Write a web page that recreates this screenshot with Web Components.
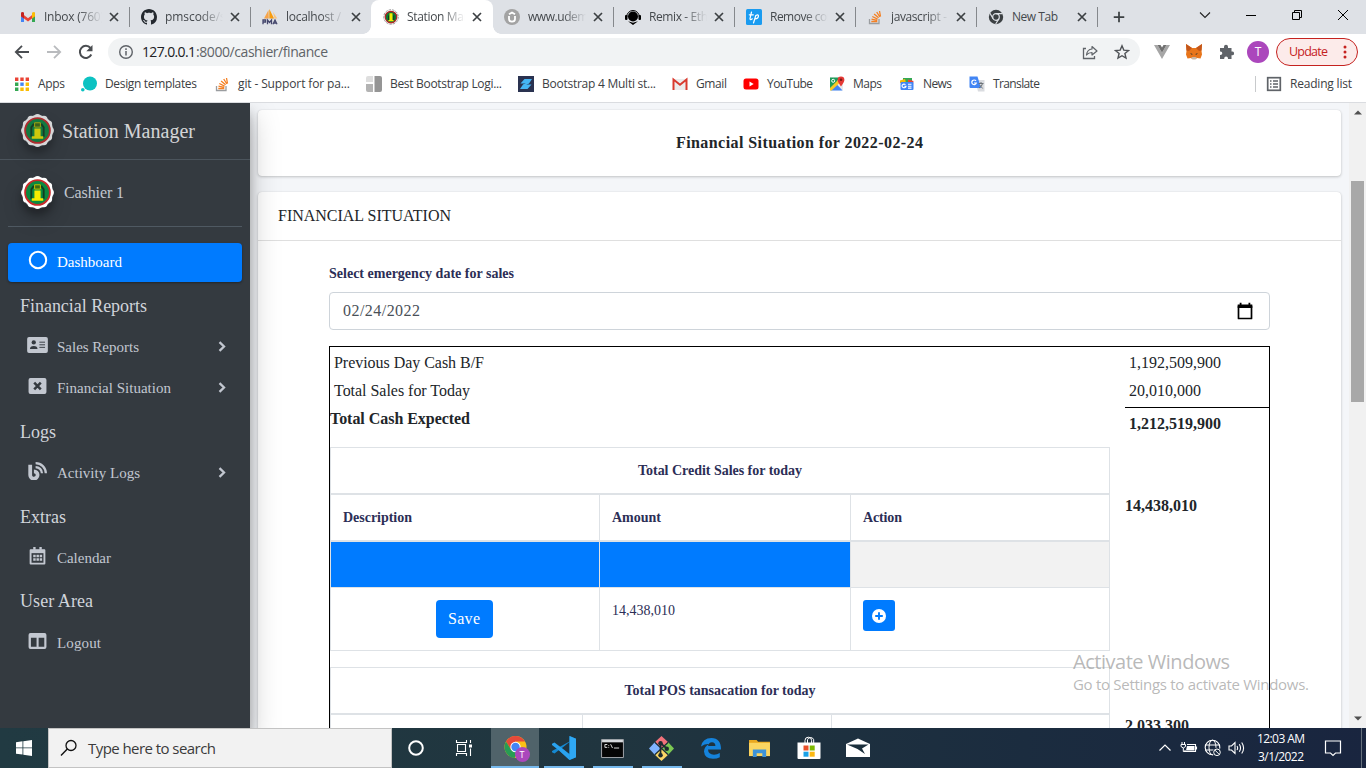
<!DOCTYPE html>
<html lang="en">
<head>
<meta charset="utf-8">
<title>Station Manager</title>
<style>
html,body{margin:0;padding:0;width:1366px;height:768px;overflow:hidden;background:#fff}
</style>
</head>
<body>
<desktop-screen></desktop-screen>
<script>
const ICONS = {
gmail:['0 0 16 16','<path d="M1 3.5V13h3V7.5z" fill="#4285f4"/><path d="M15 3.500V13h-3V7.500z" fill="#34a853"/><path d="M1 3.800 8 9.200v3.200L1 7.200z" fill="#ea4335"/><path d="M8 9.200 15 3.800v3.400L8 12.400z" fill="#ea4335"/><path d="M12 6.200 15 4v3.300l-3 2.200z" fill="#fbbc04"/><path d="M1 7.200V4.300Q1.300 2.300 3.400 3.200L4 3.800v5.700z" fill="#c5221f"/><path d="M12 3.800Q14.800 2 15 4.500v2.200l-3 2.300z" fill="#fbbc04"/>'],
github:['0 0 16 16','<path fill="#24292f" fill-rule="evenodd" d="M8 0C3.58 0 0 3.58 0 8c0 3.540 2.290 6.530 5.470 7.590.4.070.550-.170.550-.380 0-.190-.010-.820-.010-1.490-2.010.370-2.530-.490-2.690-.940-.090-.230-.480-.940-.820-1.130-.280-.150-.680-.520-.010-.530.630-.010 1.080.580 1.230.820.720 1.210 1.870.870 2.330.660.070-.520.280-.870.510-1.070-1.780-.200-3.640-.890-3.640-3.950 0-.870.310-1.590.820-2.150-.080-.200-.360-1.020.080-2.120 0 0 .670-.210 2.200.820.640-.180 1.320-.270 2-.270s1.360.090 2 .270c1.530-1.040 2.200-.820 2.200-.820.440 1.100.160 1.920.080 2.120.510.560.820 1.270.820 2.150 0 3.070-1.870 3.750-3.650 3.950.290.250.540.730.540 1.480 0 1.070-.010 1.930-.010 2.200 0 .210.150.460.550.380A8.010 8.010 0 0 0 16 8c0-4.420-3.580-8-8-8z"/>'],
pma:['0 0 16 16','<path d="M2 9.500 6.500 1l.3 8.500z" fill="#f7a54b"/><path d="M7.300 9.500V0l4.800 9.500z" fill="#f89c0e"/><path d="M11 3l4.300 6.500H12.500z" fill="#fbc57c"/><path d="M1 15.200v-4.200h2.500v2H1M5.500 15.200v-4.200L7.500 13.500 9.500 11v4.200M11 15.200l2-4.200 2 4.200M12 14h2.500" fill="none" stroke="#44466c" stroke-width="1.300"/>'],
station:['0 0 32 32','<g fill="#fff"><circle cx="16" cy="16" r="15"/><circle cx="16" cy="3.600" r="3.500"/><circle cx="22.200" cy="5.300" r="3.500"/><circle cx="26.700" cy="9.800" r="3.500"/><circle cx="28.400" cy="16" r="3.500"/><circle cx="26.700" cy="22.200" r="3.500"/><circle cx="22.200" cy="26.700" r="3.500"/><circle cx="16" cy="28.400" r="3.500"/><circle cx="9.800" cy="26.700" r="3.500"/><circle cx="5.300" cy="22.200" r="3.500"/><circle cx="3.600" cy="16" r="3.500"/><circle cx="5.300" cy="9.800" r="3.500"/><circle cx="9.800" cy="5.300" r="3.500"/></g><circle cx="16" cy="16" r="12" fill="#0b8a41" stroke="#c92a2a" stroke-width="1.800"/><path d="M10 22v-9l2.500-3.500M22 22v-9l-2.500-3.500" fill="none" stroke="#123c1f" stroke-width="1.800"/><path d="M13 14h6v7.500h2.500V24h-11v-2.500H13z" fill="#f5ec00"/><path d="M13.200 8.500h5.600v4.200h-5.600z" fill="#3d6b12" stroke="#c9c400" stroke-width=".9"/>'],
tabstation:['0 0 32 32','<circle cx="16" cy="16" r="14.500" fill="#fff" stroke="#9a9a9a" stroke-width="2" stroke-dasharray="5 2"/><circle cx="16" cy="16" r="11.500" fill="#0b7a35" stroke="#b02525" stroke-width="2.500"/><path d="M11 22v-9M21.500 22v-9" stroke="#123c1f" stroke-width="2"/><path d="M13 8.500h6V22h2v2.500H11V22h2z" fill="#f5ec00"/>'],
udemy:['0 0 16 16','<circle cx="8" cy="8" r="8" fill="#a3a3a3"/><path d="M5 7v3a3 2.700 0 0 0 6 0V7M5 5.300 8 3.500l3 1.800" fill="none" stroke="#fff" stroke-width="1.800"/>'],
remix:['0 0 16 16','<circle cx="8" cy="7.500" r="5"/><path d="M1.700 8a6.300 6.500 0 1 1 12.600 0" fill="none" stroke="#000" stroke-width="1"/><rect x="0" y="6" width="2.500" height="5" rx="1"/><rect x="13.500" y="6" width="2.500" height="5" rx="1"/><path d="M3 12.300 8 16l5-3.700-5 1.500z"/>'],
tp:['0 0 16 16','<rect width="16" height="16" rx="1.500" fill="#1a9bf0"/><path d="M5.500 3 4 9.500q0 2 2.300.3M3.300 5.800h4M7.500 14l2.300-7.500q2.500-1.300 2.700.3 0 3-3.500 3" fill="none" stroke="#fff" stroke-width="1.200" stroke-linecap="round"/>'],
so:['0 0 16 16','<path d="M2.500 10v4.500h9.500V10" fill="none" stroke="#9a9da0" stroke-width="1.300"/><path d="M4.300 12.500h6M4.500 10.200l5.800 1.100M5.300 7.500l5.300 2.600M7.100 5l4.500 3.800M9.700 3l3.200 5M12.500 2l1 5.500" stroke="#f48024" stroke-width="1.300"/>'],
chromegray:['0 0 16 16','<circle cx="8" cy="8" r="7.200" fill="#3c4043"/><circle cx="8" cy="8" r="3.300" fill="#3c4043" stroke="#dee1e6" stroke-width="1.200"/><path d="M8 4.700h6.500M5.100 9.700 2 4.300M10.900 9.700 7.700 15" stroke="#dee1e6" stroke-width="1.200"/>'],
close:['0 0 16 16','<path d="M4 4l8 8M12 4l-8 8" stroke="#3c4043" stroke-width="1.700"/>'],
plus:['0 0 16 16','<path d="M8 2v12M2 8h12" stroke="#3c4043" stroke-width="2"/>'],
chevdown:['0 0 16 16','<path d="M3 5.500 8 10.500 13 5.500" fill="none" stroke="#222" stroke-width="1.100"/>'],
min:['0 0 16 16','<path d="M3 8.500h10" stroke="#000"/>'],
restore:['0 0 16 16','<path d="M3.500 5.500h7v7h-7zM5.500 5V3.500h7v7H11" fill="none" stroke="#000"/>'],
winclose:['0 0 16 16','<path d="M3 3l10 10M13 3 3 13" stroke="#000" stroke-width="1"/>'],
back:['0 0 16 16','<path d="M15 8H2M8 1.800 1.800 8 8 14.200" fill="none" stroke="#4a4d51" stroke-width="1.800"/>'],
fwd:['0 0 16 16','<path d="M1 8h13M8 1.800 14.200 8 8 14.200" fill="none" stroke="#b9bbbe" stroke-width="1.800"/>'],
reload:['0 0 16 16','<path d="M13.300 10.500A6 6 0 1 1 12.500 4" fill="none" stroke="#4a4d51" stroke-width="2"/><path d="M14.500 1v6.300H8.300z" fill="#4a4d51"/>'],
info:['0 0 16 16','<circle cx="8" cy="8" r="6.300" fill="none" stroke="#5f6368" stroke-width="1.400"/><path d="M8 7v4.500M8 4.300V6" stroke="#5f6368" stroke-width="1.500"/>'],
share:['0 0 16 16','<path d="M4 4.500H1.500v10h11V12" fill="none" stroke="#5f6368" stroke-width="1.300"/><path d="M4.500 11Q5 5.500 10 5V2.500L15 7l-5 4V8.500Q6.500 8.500 4.500 11z" fill="none" stroke="#5f6368" stroke-width="1.200" stroke-linejoin="round"/>'],
star:['0 0 16 16','<path d="M8 1.800l1.800 4.300 4.700.4-3.600 3 1.100 4.600L8 11.700l-4 2.400 1.100-4.600-3.600-3 4.700-.4z" fill="none" stroke="#505357" stroke-width="1.400"/>'],
vue:['0 0 16 16','<path d="M0 1h3.500L8 8.800 12.500 1H16L8 15z" fill="#a6a6a6"/><path d="M3.500 1h3L8 3.600 9.500 1h3L8 8.800z" fill="#707070"/>'],
fox:['0 0 16 16','<path d="M0 0l6 4h4l6-4-.5 7 .5 3.500-1.500 4L11 14l-1.500 1h-3L5 14l-3.500.5-1.500-4L.5 7z" fill="#e8751a"/><path d="M0 0l6 4-3 3-2.500-.5zM16 0l-6 4 3 3 2.500-.5z" fill="#c3561a"/><path d="M4 9l2.500 1L6 11zM12 9l-2.500 1 .5 1zM6.500 13h3l.3 1.500H6.200z" fill="#24302f"/><path d="M5 14l1.300-1h3.400l1.300 1-1.500 1.500h-3z" fill="#c9b7a5"/>'],
puzzle:['0 0 16 16','<path d="M6 2.800a2 2 0 0 1 4 0V4h3.500v3.500h.7a1.900 1.900 0 0 1 0 3.800h-.7V15H10v-.5a1.900 1.900 0 0 0-3.800 0v.5H2v-4h.5a1.800 1.800 0 0 0 0-3.600H2V4h4z" fill="#5f6368"/>'],
dots:['0 0 16 16','<g fill="#c5221f"><circle cx="8" cy="3" r="1.500"/><circle cx="8" cy="8" r="1.500"/><circle cx="8" cy="13" r="1.500"/></g>'],
apps:['0 0 16 16','<g><path fill="#ea4335" d="M1 1.500h3.400v3.400H1zM6.300 1.500h3.400v3.400H6.300zM11.600 1.500H15v3.400h-3.400z"/><path fill="#34a853" d="M1 6.500h3.400v3.400H1zM1 11.500h3.400v3.400H1z"/><path fill="#4285f4" d="M6.300 6.500h3.400v3.400H6.300z"/><path fill="#fbbc04" d="M11.600 6.500H15v3.400h-3.400zM6.300 11.500h3.400v3.400H6.300zM11.600 11.500H15v3.400h-3.400z"/></g>'],
design:['0 0 16 16','<circle cx="9" cy="7.500" r="7" fill="#0cc2c2"/><circle cx="1.800" cy="13.800" r="1.800" fill="#0cc2c2"/>'],
bestboot:['0 0 16 16','<path d="M0 2q0-2 2-2h5v6H0z" fill="#dedede"/><path d="M0 8h7v8H2q-2 0-2-2z" fill="#b3b3b3"/><path d="M8.500 0H14q2 0 2 2v12q0 2-2 2H8.500z" fill="#959595"/>'],
bs4:['0 0 16 16','<path d="M0 0h16v16H0z" fill="#2a3250"/><path d="M6.500 3h7.500L11 7.500H2.500zM5 8.500h8.500L9.500 13H2z" fill="#45b5f5"/><path d="M5.500 9.500 10.500 6.500" stroke="#45b5f5" stroke-width="2"/>'],
gmail2:['0 0 16 16','<path d="M1 3h14v11H1z" fill="#ececec"/><path d="M1.500 14V3.500L8 8.800l6.500-5.300V14" fill="none" stroke="#d93a2f" stroke-width="2"/>'],
youtube:['0 0 16 16','<rect x="0.500" y="2.500" width="15" height="11" rx="2.500" fill="#f00"/><path d="M6.500 5.500v5L10.700 8z" fill="#fff"/>'],
maps:['0 0 16 16','<path d="M1 1.500h13v13H1z" fill="#e8eaed"/><path d="M1 1.500h9L7 8l-6 5.500z" fill="#1e9c5a"/><path d="M1.500 14.500 8 8.500l5.500 6z" fill="#4285f4"/><path d="M1 12 9 4l2 2.500-8.500 8H1z" fill="#f8c926"/><path d="M12 10.500Q8.500 6 8.600 3.800a3.400 3.400 0 0 1 6.800 0Q15.500 6 12 10.500z" fill="#e53935"/><circle cx="12" cy="3.800" r="1.300" fill="#7c1b16"/><circle cx="4.200" cy="4.800" r="1.500" fill="none" stroke="#fff"/>'],
news:['0 0 16 16','<path d="M4 2h9v4H4z" fill="#34a853"/><path d="M1 4.500l5-1.500 1 4H1z" fill="#fbbc04"/><path d="M9 3.500l5.500 1.500-.5 3H9z" fill="#ea4335"/><rect x="1.500" y="6" width="13" height="8" rx="1" fill="#4285f4"/><path d="M6.500 8.700A2 1.800 0 1 0 7 10.300H5.300M9 8.300h3.500M9 10.200h3.500M9 12.100h3.500" fill="none" stroke="#fff" stroke-width="1.100"/>'],
translate:['0 0 16 16','<path d="M6 4h9.500v11.500H9z" fill="#dadce0"/><path d="M0.500 0.500h8L12 12H1.500q-1 0-1-1z" fill="#4285f4"/><path d="M7 5A2.300 2.300 0 1 0 7.300 7H5" fill="none" stroke="#fff" stroke-width="1.200"/><path d="M9.500 7.500h5M12 6v1.500M13.500 7.500q-.5 3-3.500 4.500M10.700 9l3 3.500" fill="none" stroke="#6d7378"/>'],
reading:['0 0 16 16','<rect x="1.700" y="1.700" width="12.600" height="12.600" fill="none" stroke="#5f6368" stroke-width="1.700"/><path d="M4 5h1.500M7 5h5M4 8h1.500M7 8h5M4 11h1.500M7 11h5" stroke="#5f6368" stroke-width="1.400"/>'],
ring:['0 0 20 20','<circle cx="10" cy="10" r="8.200" fill="none" stroke="#fff" stroke-width="2"/>'],
idcard:['0 0 22 17','<rect width="22" height="17" rx="2" fill="#c2c7d0"/><circle cx="7" cy="5.800" r="2.300" fill="#343a40"/><path d="M3 12.800q0-3.300 4-3.300t4 3.300z" fill="#343a40"/><path d="M13 5.500h6M13 8.300h6M13 11h6" stroke="#343a40" stroke-width="1"/>'],
xbox:['0 0 19 17','<rect width="19" height="17" rx="2" fill="#c2c7d0"/><path d="M6 5l7 7M13 5l-7 7" stroke="#343a40" stroke-width="2.700"/>'],
blog:['0 0 20 19','<path d="M2.300 3v10.500A3.900 3.900 0 1 0 6.200 9.800" fill="none" stroke="#c2c7d0" stroke-width="4"/><path d="M8 1.200A10.800 10.800 0 0 1 18.800 12M8 5.300A6.700 6.700 0 0 1 14.700 12" fill="none" stroke="#c2c7d0" stroke-width="2.400"/>'],
cal:['0 0 17 19','<path d="M4 0h2.500v3H4zM10.500 0H13v3h-2.500z" fill="#c2c7d0"/><path d="M1.200 3.500h14.600v14H1.200z" fill="none" stroke="#c2c7d0" stroke-width="2" stroke-linejoin="round"/><path d="M1 3h15v3.500H1z" fill="#c2c7d0"/><path d="M4 9.500h9.500M4 13.200h9.500" stroke="#c2c7d0" stroke-width="2.600" stroke-dasharray="2.600 .8"/>'],
cols:['0 0 19 17','<path fill="#c2c7d0" fill-rule="evenodd" d="M2 0h15q2 0 2 2v13q0 2-2 2H2q-2 0-2-2V2Q0 0 2 0zM2.500 5v9.500h6V5zM10.700 5v9.500h6V5z"/>'],
angle:['0 0 8 11','<path d="M1.500 1.200 6 5.500 1.500 9.800" fill="none" stroke="#c2c7d0" stroke-width="2.300"/>'],
date:['0 0 16 18','<path d="M1.500 4h13v12.500h-13z" fill="none" stroke="#000" stroke-width="1.700" stroke-linejoin="round"/><path d="M.7 2.500h14.600V6H.7zM2.700 .8h1.800v2H2.700zM11.500 .8h1.800v2h-1.800z"/>'],
pluscircle:['0 0 14 14','<circle cx="7" cy="7" r="7" fill="#fff"/><path d="M7 3.200v7.600M3.200 7h7.600" stroke="#007bff" stroke-width="1.900"/>'],
up:['0 0 8 5','<path d="M0 4.500 4 .5l4 4z" fill="#505050"/>'],
down:['0 0 8 5','<path d="M0 .5h8l-4 4z" fill="#505050"/>'],
win:['0 0 16 16','<path d="M0 2.300 6.500 1.300v6.200H0zM7.300 1.200 16 0v7.500H7.300zM0 8.300h6.500v6.300L0 13.700zM7.300 8.300H16V16l-8.700-1.200z" fill="#fff"/>'],
search:['0 0 18 18','<circle cx="11" cy="6.500" r="5" fill="none" stroke="#111" stroke-width="1.300"/><path d="M7.300 10 1 16.500" stroke="#111" stroke-width="1.400"/>'],
cortana:['0 0 18 18','<circle cx="9" cy="9" r="6.800" fill="none" stroke="#fff" stroke-width="2"/>'],
taskview:['0 0 18 18','<path d="M1.500 1v2.500h10V1M1.500 17v-2.500h10V17M2.500 5.500h8v7h-8zM15.500 1v3M15.500 9.500V17" fill="none" stroke="#fff" stroke-width="1.100"/><path d="M14 5.500h3v3h-3z" fill="#fff"/>'],
chrome:['0 0 26 26','<circle cx="11.500" cy="12" r="11" fill="#fbc116"/><path d="M2 6.500A11 11 0 0 1 21 6.500H11.500L7 14.500z" fill="#e5493a"/><path d="M2 6.500A11 11 0 0 0 10.500 23l5-8.500H7z" fill="#279c54"/><circle cx="11.500" cy="12" r="5.200" fill="#fff"/><circle cx="11.500" cy="12" r="4.200" fill="#4285f4"/>'],
vscode:['0 0 24 24','<path d="M17.500 0 24 2.700v18.600L17.500 24 7 14 2.500 17.500 0 16.300V15l17.500-9.500z" fill="#1589d1"/><path d="M0 9V7.700l2.500-1.200L17.500 18v6L7 14.500z" fill="#2aa3ef"/><path d="M17.500 6v12L10 12z" fill="#20343f"/><path d="M17.500 0 24 2.700v18.600L17.500 24z" fill="#2fa8f4"/>'],
cmd:['0 0 24 20','<path d="M.5.5h23v19H.5z" fill="#050505" stroke="#a7abb0"/><path d="M1 1h22v2.500H1z" fill="#d7dadd"/><path d="M6.500 5.800H4v3h2.500M8 6.300v.8M8 8.300v.8M10 5.500l2 4M13.500 9.500H19" fill="none" stroke="#e3e3e3" stroke-width="1"/>'],
git:['0 0 26 26','<path d="M13 0 20 6.500l-7 6.500-7-6.500z" fill="#f2727b"/><path d="M6 6.500l7 6.500-7 6.500L0 13z" fill="#80b3ff"/><path d="M20 6.500 26 13l-6 6.500-7-6.500z" fill="#7cc953"/><path d="M13 13l7 6.500-7 6.500-7-6.500z" fill="#fbd766"/><path d="M6 6.500 20 19.500M20 6.500 6 19.500" stroke="#203138" stroke-width="1.300"/><path d="M12 6.500v14M12 7.500l6.500 5.500" stroke="#1d2b30" stroke-width="1.800"/><circle cx="12" cy="7.500" r="2.300" fill="#1d2b30"/><circle cx="18.500" cy="13.300" r="2.300" fill="#1d2b30"/><circle cx="12" cy="20" r="2.300" fill="#1d2b30"/>'],
edge:['0 0 22 22','<path d="M1 9.500Q2.500 1 11.500 1 21 1.200 21 12.500H8Q8.300 17.500 14 17.700q3.200 0 5.800-1.600v4.200Q17 21.800 13 21.800 4.500 21.500 4 14.500q.2-5.300 5.500-7.800Q4 7 1 9.500zM8.100 9h7.300Q15.300 5.300 12 5.300 8.600 5.500 8.100 9z" fill="#1583dc"/>'],
folder:['0 0 24 20','<path d="M1 1h8l1.500 2H23v15H1z" fill="#e9a820"/><path d="M1 4h22v14H1z" fill="#fbd561"/><path d="M5 19v-8h14v8h-4v-4H9v4z" fill="#3d93d9"/>'],
store:['0 0 24 24','<path d="M8 7V4.500a3.300 3.300 0 0 1 6.600 0V7M10.500 7V3.700a3.300 3.300 0 0 1 6.200 0V7" fill="none" stroke="#fff"/><path d="M.5 6.500h23V22q0 1-1 1h-21q-1 0-1-1z" fill="#fff"/><path d="M6.500 9.500h5v5h-5z" fill="#e8502a"/><path d="M12.700 9.500h5v5h-5z" fill="#7eb900"/><path d="M6.500 15.700h5v5h-5z" fill="#1ba1e6"/><path d="M12.700 15.700h5v5h-5z" fill="#fcb813"/>'],
mail:['0 0 24 20','<path d="M0 6 12 .5 24 6v13H0z" fill="#fff"/><path d="M1 6.500h21.500L16 10.500l3 5.500-7.500-5z" fill="#1b2f3c"/>'],
traycaret:['0 0 16 16','<path d="M2.500 10.500 8 5l5.500 5.500" fill="none" stroke="#fff" stroke-width="1.200"/>'],
battery:['0 0 18 16','<path d="M7 4.500h8.500v7H5V10M16.500 6.500v3" fill="none" stroke="#fff" stroke-width="1.100"/><path d="M7 6h7.500v4.500H6z" fill="#fff"/><path d="M2 2v2.500M4.500 2v2.500M1 4.500h4.500v2L3.300 8 1 6.500zM3.300 8v3.500H5" fill="none" stroke="#fff"/>'],
globe:['0 0 18 18','<circle cx="8.500" cy="8.500" r="7.300" fill="none" stroke="#fff" stroke-width="1.100"/><ellipse cx="8.500" cy="8.500" rx="3.500" ry="7.300" fill="none" stroke="#fff"/><path d="M1 6h15M1 11h15" stroke="#fff"/><circle cx="13" cy="13.300" r="4.500" fill="#1a2a40"/><circle cx="13" cy="13.300" r="3.300" fill="none" stroke="#fff"/><path d="M10.800 11l4.500 4.500" stroke="#fff"/>'],
sound:['0 0 18 16','<path d="M1 6h2.500L7 2.500v11L3.500 10H1zM9 6q1.300 2 0 4M11.300 4.300q2.500 3.700 0 7.400M13.700 2.500q3.800 5.500 0 11" fill="none" stroke="#fff" stroke-width="1.100"/>'],
notif:['0 0 18 18','<path d="M1.500 2h15v12h-5L9 16.500 6.500 14h-5z" fill="none" stroke="#fff" stroke-width="1.200"/>']
};
function define(name, css, html){
  const t = document.createElement('template');
  t.innerHTML = '<style>' + css + '</style>' + html;
  customElements.define(name, class extends HTMLElement{
    constructor(){ super(); this.attachShadow({mode:'open'}).append(t.content.cloneNode(true)); }
  });
}
/* <ui-icon name w h> : inline SVG from the icon set */
customElements.define('ui-icon', class extends HTMLElement{
  connectedCallback(){
    if(this.shadowRoot) return;
    const [vb, body] = ICONS[this.getAttribute('name')];
    const w = this.getAttribute('w') || 16, h = this.getAttribute('h') || w;
    this.attachShadow({mode:'open'}).innerHTML =
      `<style>:host{display:block;flex:none;width:${w}px;height:${h}px}svg{display:block}</style><svg width="${w}" height="${h}" viewBox="${vb}">${body}</svg>`;
  }
});

/* ---------- browser chrome ---------- */
customElements.define('browser-tab', class extends HTMLElement{
  constructor(){
    super();
    const a = this.hasAttribute('active');
    this.attachShadow({mode:'open'}).innerHTML = `<style>
    :host{display:flex;align-items:center;box-sizing:border-box;width:121px;height:34px;padding-left:11px;position:relative;flex:none;color:#45494d;
      ${a ? 'background:#fff;border-radius:8px 8px 0 0;width:122px;padding-left:12px;margin-left:-1px;' : ''}}
    :host([active])::before,:host([active])::after{content:"";position:absolute;bottom:0;width:8px;height:8px}
    :host([active])::before{left:-8px;background:radial-gradient(circle at 0 0,transparent 7.5px,#fff 8px)}
    :host([active])::after{right:-8px;background:radial-gradient(circle at 100% 0,transparent 7.5px,#fff 8px)}
    .label{width:58px;margin-left:8px;overflow:hidden;-webkit-mask-image:linear-gradient(90deg,#000 60%,transparent 100%)}
    :host([whole]) .label{-webkit-mask-image:none}
    .x{margin-left:4px}
    .sep{width:1px;height:20px;background:#85888c;margin-left:7px}
    :host([nosep]) .sep,:host([active]) .sep{display:none}
    </style><ui-icon name="${this.getAttribute('icon')}"></ui-icon><div class="label"><slot></slot></div><ui-icon class="x" name="close"></ui-icon><div class="sep"></div>`;
  }
});
define('tab-strip', `:host{display:flex;height:34px;background:#dee1e6;padding-left:9px;font:12px/18px "Open Sans",sans-serif;align-items:center}
 .plus{margin-left:14px}.win{display:flex;margin-left:auto;padding-right:15px;gap:30px;margin-top:-5px}`,
`<browser-tab icon="gmail"><ui-text w="60">Inbox (760)</ui-text></browser-tab>
<browser-tab icon="github"><ui-text w="65">pmscode/st</ui-text></browser-tab>
<browser-tab icon="pma" nosep><ui-text w="58">localhost / </ui-text></browser-tab>
<browser-tab icon="tabstation" active><ui-text w="64">Station Man</ui-text></browser-tab>
<browser-tab icon="udemy"><ui-text w="66">www.udemy</ui-text></browser-tab>
<browser-tab icon="remix"><ui-text w="59">Remix - Eth</ui-text></browser-tab>
<browser-tab icon="tp"><ui-text w="64">Remove con</ui-text></browser-tab>
<browser-tab icon="so"><ui-text w="56">javascript -</ui-text></browser-tab>
<browser-tab icon="chromegray" whole><ui-text w="46">New Tab</ui-text></browser-tab>
<ui-icon class="plus" name="plus" w="14"></ui-icon>
<div class="win"><ui-icon name="chevdown"></ui-icon><ui-icon name="min"></ui-icon><ui-icon name="restore"></ui-icon><ui-icon name="winclose"></ui-icon></div>`);

define('nav-toolbar', `:host{display:flex;align-items:center;height:36px;background:#fff;box-sizing:border-box;padding:0 8px 0 14px;font:14px/20px "Open Sans",sans-serif;color:#5f6368}
 .nav{display:flex;gap:16px;width:94px}
 .omni{display:flex;align-items:center;width:1032px;height:28px;box-sizing:border-box;background:#f1f3f4;border-radius:14px;padding:0 10px}
 .url{display:flex;margin-left:8px;flex:1}.host{color:#202124}
 .act{display:flex;gap:16px}.ext{display:flex;gap:16px;margin-left:14px}
 .av{width:22px;height:22px;border-radius:50%;background:#ab47bc;color:#fff;font:12px/22px "Open Sans",sans-serif;text-align:center;margin-left:13px}
 .upd{display:flex;align-items:center;justify-content:space-between;box-sizing:border-box;width:82px;height:28px;border:1px solid #c5221f;border-radius:14px;background:#fcebea;color:#c5221f;padding:0 4px 0 12px;font-size:12.500px;margin-left:7px}`,
`<div class="nav"><ui-icon name="back"></ui-icon><ui-icon name="fwd"></ui-icon><ui-icon name="reload"></ui-icon></div>
<div class="omni"><ui-icon name="info"></ui-icon><div class="url"><ui-text class="host" w="54">127.0.0.1</ui-text><ui-text w="132">:8000/cashier/finance</ui-text></div>
<div class="act"><ui-icon name="share"></ui-icon><ui-icon name="star"></ui-icon></div></div>
<div class="ext"><ui-icon name="vue"></ui-icon><ui-icon name="fox"></ui-icon><ui-icon name="puzzle"></ui-icon></div>
<div class="av">T</div><div class="upd"><ui-text w="39">Update</ui-text><ui-icon name="dots"></ui-icon></div>`);

customElements.define('book-mark', class extends HTMLElement{
  constructor(){ super(); this.attachShadow({mode:'open'}).innerHTML = `<style>:host{display:flex;gap:8px;align-items:center}</style><ui-icon name="${this.getAttribute('icon')}"></ui-icon><slot></slot>`; }
});
define('bookmarks-bar', `:host{display:flex;height:33px;box-sizing:border-box;background:#fff;border-bottom:1px solid #dadce0;padding:0 14px 5px 14px;align-items:center;font:12px/18px "Open Sans",sans-serif;color:#3c4043;justify-content:space-between}
 .list{display:grid;grid-template-columns:67px 133px 152px 152px 154px 71px 86px 70px 70px 80px}
 .rl{border-left:1px solid #c8cacc;padding-left:10px;height:16px;display:flex;align-items:center}`,
`<div class="list"><book-mark icon="apps"><ui-text w="27">Apps</ui-text></book-mark>
<book-mark icon="design"><ui-text w="92">Design templates</ui-text></book-mark>
<book-mark icon="so"><ui-text w="112">git - Support for pa...</ui-text></book-mark>
<book-mark icon="bestboot"><ui-text w="112">Best Bootstrap Logi...</ui-text></book-mark>
<book-mark icon="bs4"><ui-text w="114">Bootstrap 4 Multi st...</ui-text></book-mark>
<book-mark icon="gmail2"><ui-text w="31">Gmail</ui-text></book-mark>
<book-mark icon="youtube"><ui-text w="46">YouTube</ui-text></book-mark>
<book-mark icon="maps"><ui-text w="29">Maps</ui-text></book-mark>
<book-mark icon="news"><ui-text w="29">News</ui-text></book-mark>
<book-mark icon="translate"><ui-text w="47">Translate</ui-text></book-mark></div>
<div class="rl"><book-mark icon="reading"><ui-text w="62">Reading list</ui-text></book-mark></div>`);

/* ---------- sidebar ---------- */
customElements.define('nav-item', class extends HTMLElement{
  constructor(){
    super();
    this.attachShadow({mode:'open'}).innerHTML = `<style>
    :host{display:flex;align-items:center;height:39px;margin-bottom:2px;box-sizing:border-box;padding:0 16px 2px 17px;border-radius:4px;font-size:15px;color:#c2c7d0}
    :host([active]){background:#007bff;color:#fff;box-shadow:0 1px 3px rgba(0,0,0,.12),0 1px 2px rgba(0,0,0,.24)}
    .i{width:25px;display:flex;justify-content:center;margin-right:7px;margin-top:-3px}
    .a{margin-left:auto}</style>
    <div class="i"><ui-icon name="${this.getAttribute('icon')}" w="${this.getAttribute('iw')}" h="${this.getAttribute('ih')}"></ui-icon></div><slot></slot>
    ${this.hasAttribute('more') ? '<ui-icon class="a" name="angle" w="8" h="11"></ui-icon>' : ''}`;
  }
});
define('side-bar', `:host{display:block;box-sizing:border-box;width:250px;height:100%;background:#343a40;color:#c2c7d0;box-shadow:0 14px 28px rgba(0,0,0,.25),0 10px 10px rgba(0,0,0,.22);font-family:"Liberation Serif",serif;flex:none;position:relative}
 .brand{display:flex;align-items:center;height:57px;box-sizing:border-box;padding:2px 0 2px 21px;gap:8px;border-bottom:1px solid #4b545c;color:rgba(255,255,255,.8);font-size:20px}
 .logo{border-radius:50%;box-shadow:0 10px 20px rgba(0,0,0,.19),0 6px 6px rgba(0,0,0,.23)}.brand .logo{opacity:.8;margin-top:-2px}
 .inner{padding:0 8px}
 .user{display:flex;align-items:center;height:67px;box-sizing:border-box;border-bottom:1px solid #4f5962;padding:0 0 1px 13px;gap:10px;font-size:16px;margin-bottom:16px}
 .h{font-size:18px;color:#d0d4db;padding-left:12px;height:44px;line-height:44px}
 .h.a{height:44px;line-height:43px}`,
`<div class="brand"><ui-icon class="logo" name="station" w="33"></ui-icon><ui-text w="133">Station Manager</ui-text></div>
<div class="inner"><div class="user"><ui-icon class="logo" name="station" w="33"></ui-icon><ui-text w="60">Cashier 1</ui-text></div>
<nav-item active icon="ring" iw="20" ih="20"><ui-text w="65">Dashboard</ui-text></nav-item>
<div class="h"><ui-text w="127">Financial Reports</ui-text></div>
<nav-item more icon="idcard" iw="21" ih="16"><ui-text w="82">Sales Reports</ui-text></nav-item>
<nav-item more icon="xbox" iw="19" ih="16"><ui-text w="114">Financial Situation</ui-text></nav-item>
<div class="h"><ui-text w="36">Logs</ui-text></div>
<nav-item more icon="blog" iw="19" ih="18"><ui-text w="83">Activity Logs</ui-text></nav-item>
<div class="h"><ui-text w="46">Extras</ui-text></div>
<nav-item icon="cal" iw="17" ih="18"><ui-text w="54">Calendar</ui-text></nav-item>
<div class="h a"><ui-text w="73">User Area</ui-text></div>
<nav-item icon="cols" iw="19" ih="16"><ui-text w="44">Logout</ui-text></nav-item></div>`);

/* ---------- page ---------- */
define('content-card', `:host{display:block;background:#fff;border-radius:4px;box-shadow:0 0 1px rgba(0,0,0,.125),0 1px 3px rgba(0,0,0,.2)}`, `<slot></slot>`);
define('date-field', `:host{display:flex;align-items:center;justify-content:space-between;box-sizing:border-box;width:941px;height:38px;border:1px solid #ced4da;border-radius:4px;padding:0 16px 1px 13px;font-size:16px;color:#495057}`,
 `<slot></slot><ui-icon name="date" w="16" h="18"></ui-icon>`);
define('sales-table', `:host{display:block;width:780px;box-sizing:border-box;color:#2c2e56;font-size:14px;--l:#dee2e6}
 .title{box-sizing:border-box;height:46px;border:1px solid var(--l);border-bottom:0;display:flex;justify-content:center;align-items:center;font-weight:bold;padding-top:1px}
 .row{display:grid;grid-template-columns:var(--cols,269px 251px 260px)}
 .row>div{box-sizing:border-box;border-top:2px solid var(--l);border-left:1px solid var(--l);height:47px;padding-left:12px;display:flex;align-items:center}
 .row>div:last-child{border-right:1px solid var(--l)}
 .head{font-weight:bold}
 .fill>div{background:#007bff;background-clip:padding-box}.fill>div:last-child{background:#f2f2f2}
 .foot>div{height:64px;border-top-width:1px;border-bottom:1px solid var(--l);align-items:flex-start;padding-top:12px}
 .foot>div:first-child{justify-content:center;padding:12px 2px 0 0}
 .foot .amt{line-height:21px}
 button{border:0;background:#007bff;color:#fff;border-radius:4px;display:flex;align-items:center;justify-content:center;padding:0;font:16px "Liberation Serif",serif}
 .save{width:57px;height:38px}.add{width:32px;height:31px;border-radius:3px}
 :host([brief]) .fill,:host([brief]) .foot{display:none}`,
`<div class="title"><slot></slot></div>
<div class="row head"><div><slot name="a"></slot></div><div><slot name="b"></slot></div><div><slot name="c"></slot></div></div>
<div class="row fill"><div></div><div></div><div></div></div>
<div class="row foot"><div><button class="save"><ui-text w="32">Save</ui-text></button></div><div class="amt"><slot name="amt"></slot></div><div><button class="add"><ui-icon name="pluscircle" w="14"></ui-icon></button></div></div>`);
define('scroll-bar', `:host{display:flex;flex-direction:column;align-items:center;box-sizing:border-box;width:17px;height:100%;background:#f1f1f1;padding:7px 0 7px;flex:none}
 .thumb{width:13px;height:221px;background:#a8a8a8;margin-top:66px}.d{margin-top:auto}`,
 `<ui-icon name="up" w="8" h="5"></ui-icon><div class="thumb"></div><ui-icon class="d" name="down" w="8" h="5"></ui-icon>`);
define('page-view', `:host{display:flex;height:625px;overflow:hidden;background:#f4f6f9;font:16px/28px "Liberation Serif",serif;color:#212529;position:relative}
 main{flex:1;height:625px;box-sizing:border-box;padding:7px 8px 0;overflow:hidden}
 .top{height:66px;display:flex;align-items:center;justify-content:center;font-weight:bold;margin-bottom:16px}
 .card{height:700px}
 .ch{height:48px;display:flex;align-items:center;padding-left:20px;border-bottom:1px solid #dfdfdf}
 .cb{padding:19px 0 0 71px}
 .lab{font-size:14px;font-weight:bold;color:#2c2e56;margin-bottom:4px}
 .sheet{box-sizing:border-box;width:941px;height:500px;border:1px solid #000;margin-top:16px;display:grid;grid-template-columns:795px 144px;padding-top:2px}
 .in{padding-left:4px}b{display:block}
 .t1{margin-top:14px;margin-bottom:16px}
 .sum{border-top:1px solid #000;margin-top:2px;padding:2px 0 0 4px}
 .s2{margin-top:54px}.s3{margin-top:192px}`,
`<side-bar></side-bar>
<main><content-card><div class="top"><ui-text w="247">Financial Situation for 2022-02-24</ui-text></div></content-card>
<content-card class="card"><div class="ch"><ui-text w="173">FINANCIAL SITUATION</ui-text></div>
<div class="cb"><div class="lab"><ui-text w="185">Select emergency date for sales</ui-text></div>
<date-field><ui-text w="77">02/24/2022</ui-text></date-field>
<div class="sheet"><div><div class="in"><ui-text w="150">Previous Day Cash B/F</ui-text></div><div class="in"><ui-text w="136">Total Sales for Today</ui-text></div><b><ui-text w="140">Total Cash Expected</ui-text></b>
<sales-table class="t1"><ui-text w="164">Total Credit Sales for today</ui-text><ui-text slot="a" w="69">Description</ui-text><ui-text slot="b" w="49">Amount</ui-text><ui-text slot="c" w="39">Action</ui-text><ui-text slot="amt" w="63">14,438,010</ui-text></sales-table>
<sales-table brief style="--cols:252px 249px 279px"><ui-text w="191">Total POS tansacation for today</ui-text></sales-table></div>
<div><div class="in"><ui-text w="92">1,192,509,900</ui-text></div><div class="in"><ui-text w="72">20,010,000</ui-text></div>
<b class="sum"><ui-text w="92">1,212,519,900</ui-text></b><b class="s2"><ui-text w="72">14,438,010</ui-text></b><b class="s3"><ui-text w="64">2,033,300</ui-text></b></div></div>
</div></content-card></main><scroll-bar></scroll-bar>`);

/* ---------- taskbar ---------- */
define('task-button', `:host{display:flex;position:relative;align-items:center;justify-content:center;width:49px;height:40px;flex:none;box-sizing:border-box}
 :host([open])::after{content:"";position:absolute;bottom:0;left:4.500px;width:40px;height:2px;background:#76b9ed}
 :host([current]){background:#50636a}:host([current])::after{left:0;width:48px}:host([current]){width:48px}`, `<slot></slot>`);
define('task-bar', `:host{display:flex;height:40px;align-items:center;background:linear-gradient(90deg,#213a42,#20353f 45%,#1b2c3f 75%,#19253f);font-family:"Open Sans",sans-serif;color:#fff;position:relative}
 .start{width:48px;display:flex;justify-content:center}
 .search{display:flex;align-items:center;box-sizing:border-box;width:344px;height:40px;background:#f2f2f2;border:1px solid #c3c3c3;padding:0 11px;gap:10px;color:#3b3b3b;font-size:15px}
 .btns{display:flex}.chr{position:relative;margin-left:3px}
 .badge{position:absolute;right:0;bottom:-1px;width:15px;height:15px;border-radius:50%;background:#ab47bc;color:#fff;font:9px/15px "Open Sans",sans-serif;text-align:center}
 .tray{margin-left:auto;display:flex;align-items:center;padding-right:4px}
 .clock{font-size:12px;line-height:18px;display:flex;flex-direction:column;align-items:center;width:48px;margin:0 19px 0 11px}
 .show{width:1px;height:40px;background:#65707c;margin-left:19px}`,
`<div class="start"><ui-icon name="win"></ui-icon></div>
<div class="search"><ui-icon name="search" w="18"></ui-icon><ui-text w="128">Type here to search</ui-text></div>
<div class="btns"><task-button style="width:48px"><ui-icon name="cortana" w="18"></ui-icon></task-button><task-button style="width:51px;padding-right:4px"><ui-icon name="taskview" w="18"></ui-icon></task-button>
<task-button open current><div class="chr"><ui-icon name="chrome" w="26"></ui-icon><div class="badge">T</div></div></task-button>
<task-button open><ui-icon name="vscode" w="24"></ui-icon></task-button><task-button open><ui-icon name="cmd" w="23" h="19"></ui-icon></task-button><task-button open><ui-icon name="git" w="25"></ui-icon></task-button>
<task-button><ui-icon name="edge" w="22"></ui-icon></task-button><task-button><ui-icon name="folder" w="23" h="19"></ui-icon></task-button><task-button><ui-icon name="store" w="24"></ui-icon></task-button><task-button><ui-icon name="mail" w="24" h="20"></ui-icon></task-button></div>
<div class="tray"><ui-icon name="traycaret" w="16"></ui-icon><ui-icon name="battery" w="18" h="16" style="margin-left:7px"></ui-icon><ui-icon name="globe" w="18" style="margin-left:6px"></ui-icon><ui-icon name="sound" w="18" h="16" style="margin-left:6px"></ui-icon>
<div class="clock"><ui-text w="48">12:03 AM</ui-text><ui-text w="46">3/1/2022</ui-text></div><ui-icon name="notif" w="18"></ui-icon><div class="show"></div></div>`);

define('activation-notice', `:host{display:block;position:absolute;left:1073px;top:650px;color:rgba(150,150,150,.68);font-family:"Open Sans",sans-serif;z-index:5}
 .a{font-size:20px;line-height:24px}.b{font-size:15px;line-height:20px}`,
 `<div class="a"><ui-text w="157">Activate Windows</ui-text></div><div class="b"><ui-text w="236">Go to Settings to activate Windows.</ui-text></div>`);
define('desktop-screen', `:host{display:flex;flex-direction:column;width:1366px;height:768px;overflow:hidden;position:relative;background:#fff}`,
 `<tab-strip></tab-strip><nav-toolbar></nav-toolbar><bookmarks-bar></bookmarks-bar><page-view></page-view><task-bar></task-bar><activation-notice></activation-notice>`);

/* <ui-text w> : one line of text tracked to a set width; defined last so that its surroundings are laid out */
customElements.define('ui-text', class extends HTMLElement{
  constructor(){ super(); this.attachShadow({mode:'open'}).innerHTML = '<style>:host{display:block;white-space:pre}span{display:inline-block}</style><span><slot></slot></span>'; }
  connectedCallback(){
    const w = +this.getAttribute('w'), s = this.shadowRoot.querySelector('span');
    const nat = s.getBoundingClientRect().width, n = this.textContent.length;
    if(w && nat && n > 1){ s.style.letterSpacing = ((w - nat) / (n - 1)) + 'px'; s.style.marginRight = (-(w - nat) / (n - 1)) + 'px'; }
  }
});
</script>
</body>
</html>
